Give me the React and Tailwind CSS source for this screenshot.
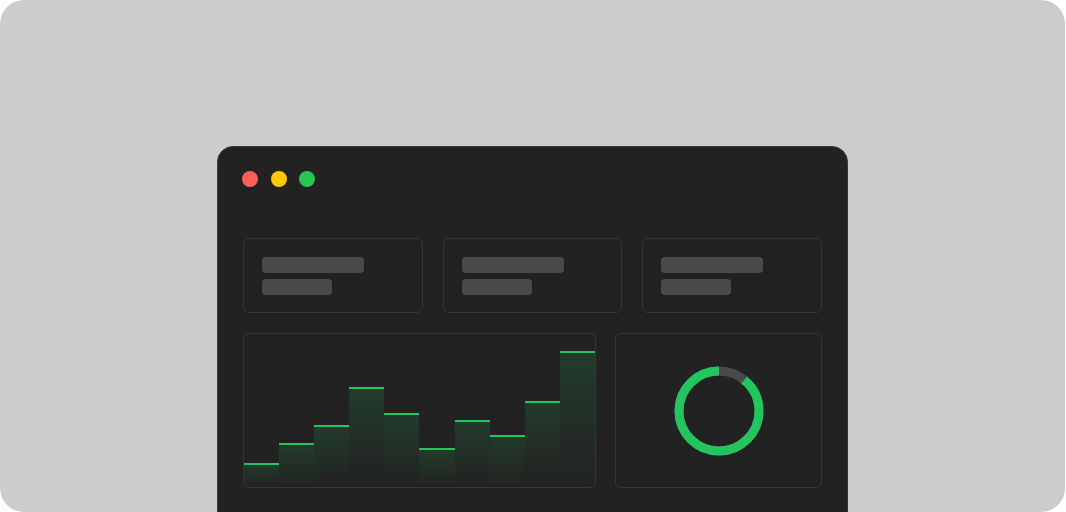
import React from 'react';

const bars = [24, 44, 62, 100, 74, 39, 67, 52, 86, 136];

const StatCard = () => (
    <div className="border border-[#363636] rounded-md px-[18px] pt-[18px] pb-[17px] flex flex-col gap-[6px]">
        <div className="h-4 w-[102px] rounded bg-[#4a4a4a]" />
        <div className="h-4 w-[70px] rounded bg-[#4a4a4a]" />
    </div>
);

const Donut = () => {
    const r = 40;
    const c = 2 * Math.PI * r;
    const value = 0.89;
    return (
        <svg width="90" height="90" viewBox="0 0 90 90">
            <circle cx="45" cy="45" r={r} fill="none" stroke="#4a4a4a" strokeWidth="9" />
            <circle
                cx="45"
                cy="45"
                r={r}
                fill="none"
                stroke="#22c55e"
                strokeWidth="9"
                strokeDasharray={`${c * value} ${c}`}
                transform="rotate(-90 45 45) scale(1 -1) translate(0 -90)"
            />
        </svg>
    );
};

const App = () => {
    return (
        <div className="w-[1065px] h-[512px] bg-[#cccccc] rounded-3xl overflow-hidden flex justify-center pt-[146px]">
            <div className="w-[631px] h-[420px] bg-[#222222] border border-[#383838] rounded-2xl px-[25px] pt-[24px]">
                <div className="flex gap-[12.5px] -ml-px">
                    <div className="w-4 h-4 rounded-full bg-[#ff5f57]" />
                    <div className="w-4 h-4 rounded-full bg-[#ffc800]" />
                    <div className="w-4 h-4 rounded-full bg-[#28c553]" />
                </div>

                <div className="grid grid-cols-3 gap-5 mt-[51px]">
                    <StatCard />
                    <StatCard />
                    <StatCard />
                </div>

                <div className="grid grid-cols-[353px_1fr] gap-[19px] mt-5">
                    <div className="h-[155px] border border-[#363636] rounded-md overflow-hidden flex items-end">
                        {bars.map((h, i) => (
                            <div
                                key={i}
                                className="flex-1 border-t-2 border-[#22c55e] bg-gradient-to-b from-[#22c55e]/15 to-[#22c55e]/0"
                                style={{ height: h }}
                            />
                        ))}
                    </div>
                    <div className="h-[155px] border border-[#363636] rounded-md flex items-center justify-center">
                        <Donut />
                    </div>
                </div>
            </div>
        </div>
    );
};

export default App;
